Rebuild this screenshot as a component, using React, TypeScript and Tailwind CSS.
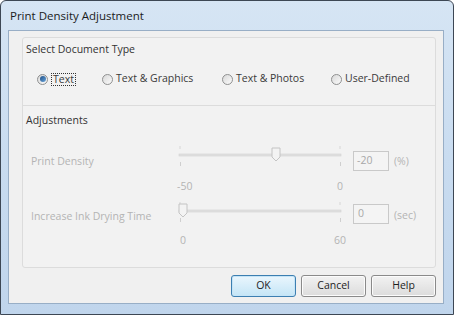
import React from "react";

const font = { fontFamily: '"Open Sans", "Noto Sans", sans-serif' };

function Radio({ checked }: { checked?: boolean }) {
  return (
    <span className="relative inline-flex w-[11px] h-[11px] rounded-full border border-[#8f9090] bg-gradient-to-br from-[#d9d9d9] to-[#fbfbfb] items-center justify-center shrink-0">
      {checked && (
        <span className="w-[6px] h-[6px] rounded-full bg-gradient-to-br from-[#1e4f86] to-[#6aa6dc]" />
      )}
    </span>
  );
}

function Slider({ pos }: { pos: number }) {
  const x = 4 + pos;
  return (
    <svg width="170" height="26" viewBox="0 0 170 26" className="block">
      <line x1="4" y1="3" x2="4" y2="6" stroke="#d6d6d6" />
      <line x1="164" y1="3" x2="164" y2="6" stroke="#d6d6d6" />
      <rect x="3" y="11" width="162" height="2" fill="#e2e2e2" stroke="#cfcfcf" strokeWidth="0.6" />
      <line x1="4.5" y1="19" x2="4.5" y2="23" stroke="#cfcfcf" />
      <line x1="164.5" y1="19" x2="164.5" y2="23" stroke="#cfcfcf" />
      <path
        d={`M${x - 4} 5 h8 v9 l-4 4 l-4 -4 z`}
        fill="#f3f3f3"
        stroke="#c4c4c4"
        strokeWidth="1"
      />
    </svg>
  );
}

function Btn({ label, def }: { label: string; def?: boolean }) {
  return (
    <div
      className={
        "w-[65px] h-[22px] rounded-[3px] flex items-center justify-center text-[10.5px] text-[#1e1e1e] border " +
        (def
          ? "border-[#3c7fb1] bg-gradient-to-b from-[#eaf6fd] to-[#c4e5f6] shadow-[inset_0_0_0_1px_#c5e4f7]"
          : "border-[#8a8a8a] bg-gradient-to-b from-[#f2f2f2] to-[#dcdcdc] shadow-[inset_0_0_0_1px_#fcfcfc]")
      }
    >
      {label}
    </div>
  );
}

export default function App() {
  return (
    <div
      style={font}
      className="w-[454px] h-[315px] border border-[#3d4754] rounded-t-[6px] bg-gradient-to-b from-[#d6e5f4] via-[#c9dcf0] to-[#c0d5ec] flex flex-col pl-[7px] pr-[9px] pb-[10px]"
    >
      <div className="h-[29px] flex items-center pl-[2px] text-[11.5px] text-[#1b1b1b]">
        Print Density Adjustment
      </div>
      <div className="flex-1 border border-[#98aec6] bg-[#f0f0f0] flex flex-col pl-[13px] pr-[7px] pt-[6px]">
        <div className="border border-[#dcdcdc] rounded-[3px] bg-[#f2f2f2] flex flex-col">
          {/* Section 1 */}
          <div className="h-[67px] flex flex-col pt-[3px] pl-[3px]">
            <div className="h-[16px] leading-[16px] text-[10.5px] text-[#333]">Select Document Type</div>
            <div className="mt-[14px] h-[16px] flex items-center pl-[11px] text-[10.5px] text-[#3a3a3a]">
              <div className="w-[65px] flex items-center gap-[3px]">
                <Radio checked />
                <span className="border border-dotted border-[#333] px-[1px] leading-[11px]">Text</span>
              </div>
              <div className="w-[120px] flex items-center gap-[3px]">
                <Radio />
                <span>Text &amp; Graphics</span>
              </div>
              <div className="w-[109px] flex items-center gap-[3px]">
                <Radio />
                <span>Text &amp; Photos</span>
              </div>
              <div className="flex items-center gap-[3px]">
                <Radio />
                <span>User-Defined</span>
              </div>
            </div>
          </div>
          {/* Section 2 */}
          <div className="border-t border-[#dcdcdc] h-[162px] flex flex-col pt-[6px] pl-[3px]">
            <div className="h-[16px] leading-[16px] text-[10.5px] text-[#333]">Adjustments</div>
            {/* Row 1 */}
            <div className="mt-[15px] flex items-start pl-[5px] text-[10.5px] text-[#b4b4b4]">
              <div className="w-[145px] mt-[10px] leading-[16px]">Print Density</div>
              <div className="flex flex-col">
                <Slider pos={96} />
                <div className="mt-[10px] h-[14px] leading-[14px] flex justify-between px-[1px]">
                  <span>-50</span>
                  <span className="mr-[2px]">0</span>
                </div>
              </div>
              <div className="ml-[7px] mt-[8px] w-[36px] h-[20px] border border-[#c9c9c9] bg-[#f4f4f4] flex items-center pl-[3px] text-[#a8a8a8]">
                -20
              </div>
              <div className="ml-[5px] mt-[10px] leading-[16px]">(%)</div>
            </div>
            {/* Row 2 */}
            <div className="mt-[6px] flex items-start pl-[5px] text-[10.5px] text-[#b4b4b4]">
              <div className="w-[145px] mt-[9px] leading-[16px]">Increase Ink Drying Time</div>
              <div className="flex flex-col">
                <Slider pos={3} />
                <div className="mt-[8px] h-[14px] leading-[14px] flex justify-between pl-[4px]">
                  <span>0</span>
                  <span>60</span>
                </div>
              </div>
              <div className="ml-[7px] mt-[5px] w-[36px] h-[20px] border border-[#c9c9c9] bg-[#f4f4f4] flex items-center pl-[4px] text-[#a8a8a8]">
                0
              </div>
              <div className="ml-[5px] mt-[8px] leading-[16px]">(sec)</div>
            </div>
          </div>
        </div>
        <div className="mt-[7px] flex justify-end gap-[5px]">
          <Btn label="OK" def />
          <Btn label="Cancel" />
          <Btn label="Help" />
        </div>
      </div>
    </div>
  );
}
